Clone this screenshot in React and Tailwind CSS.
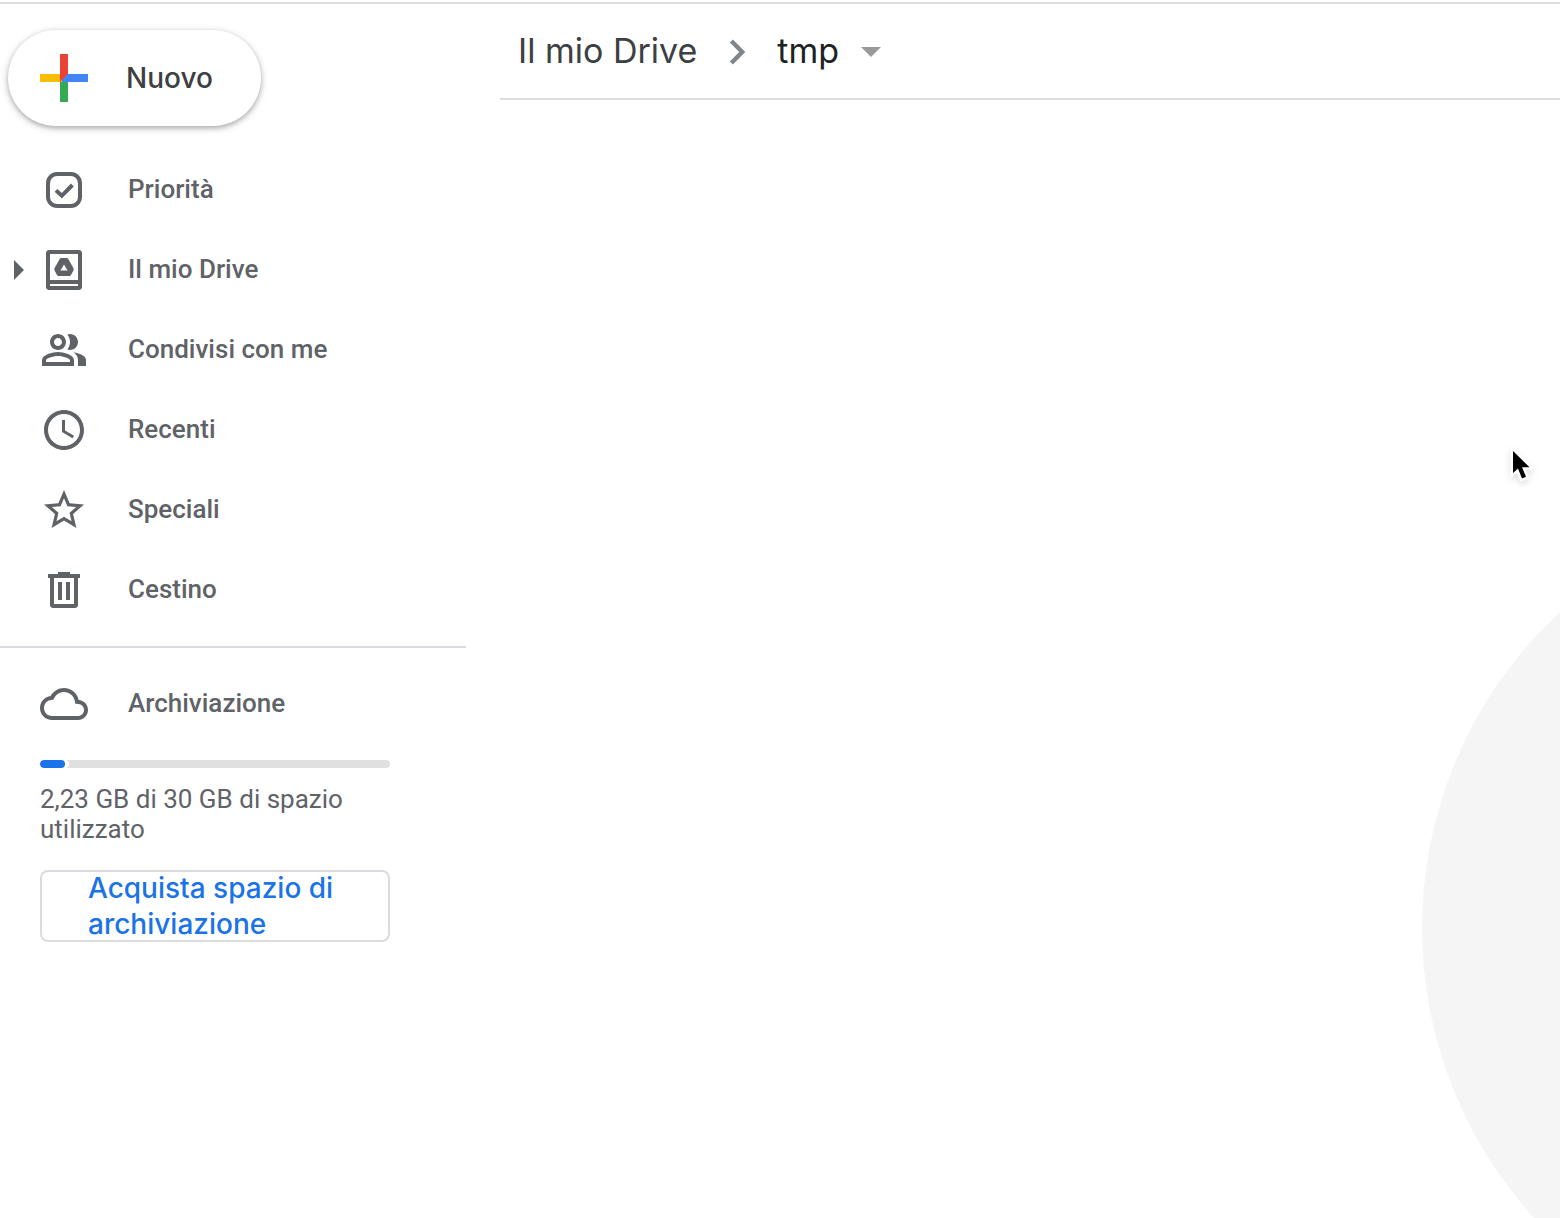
const glyphs = {
  priority: (
    <>
      <rect x="4" y="4" width="16" height="16" rx="4.6" fill="none" stroke="currentColor" strokeWidth="2" />
      <path d="M8 12.200l2.900 2.700 5.300-5.400" fill="none" stroke="currentColor" strokeWidth="2" />
    </>
  ),
  drive: (
    <>
      <path fillRule="evenodd" d="M4.500 2h15c.83 0 1.500.67 1.500 1.500v17c0 .83-.67 1.500-1.500 1.500h-15c-.83 0-1.500-.67-1.500-1.500v-17C3 2.670 3.670 2 4.500 2zM5 4v13h14V4H5zm0 15v1h14v-1H5z" />
      <path fillRule="evenodd" d="M10.600 6h2.800c.3 0 .5.1.7.4l2.700 4.900c.1.3.1.5 0 .8l-1.300 2.400c-.2.3-.4.5-.8.5H9.300c-.4 0-.6-.2-.8-.5l-1.300-2.400c-.1-.3-.1-.5 0-.8l2.700-4.900c.2-.3.4-.4.7-.4zM12 9.200l-1.800 3.100h3.600z" />
    </>
  ),
  people: (
    <path d="M16.67 13.13C18.04 14.06 19 15.32 19 17v3h4v-3c0-2.18-3.57-3.47-6.33-3.87zM15 12c2.21 0 4-1.79 4-4s-1.79-4-4-4c-.47 0-.91.1-1.33.24C14.5 5.27 15 6.58 15 8s-.5 2.73-1.33 3.76c.42.14.86.24 1.33.24zM9 12c2.21 0 4-1.79 4-4s-1.79-4-4-4-4 1.79-4 4 1.79 4 4 4zm0-6c1.1 0 2 .9 2 2s-.9 2-2 2-2-.9-2-2 .9-2 2-2zM9 13c-2.67 0-8 1.34-8 4v3h16v-3c0-2.66-5.33-4-8-4zm6 5H3v-.99C3.2 16.29 6.3 15 9 15s5.8 1.29 6 2v1z" />
  ),
  clock: (
    <path d="M11.99 2C6.47 2 2 6.48 2 12s4.47 10 9.99 10C17.52 22 22 17.52 22 12S17.52 2 11.99 2zM12 20c-4.42 0-8-3.58-8-8s3.58-8 8-8 8 3.58 8 8-3.58 8-8 8zM12.5 7H11v6l5.25 3.15.75-1.23-4.5-2.67z" />
  ),
  star: (
    <path d="M22 9.24l-7.19-.62L12 2 9.19 8.63 2 9.24l5.46 4.73L5.82 21 12 17.27 18.18 21l-1.63-7.03L22 9.24zM12 15.4l-3.76 2.27 1-4.28-3.32-2.88 4.38-.38L12 6.1l1.71 4.04 4.38.38-3.32 2.88 1 4.28L12 15.4z" />
  ),
  trash: (
    <path fillRule="evenodd" d="M9 3h6v1h5v2h-1v13.5c0 .83-.67 1.5-1.5 1.5h-11c-.83 0-1.5-.67-1.5-1.5V6H4V4h5zM7 6v13h10V6zM9 8h2v9H9zM13 8h2v9h-2z" />
  ),
  cloud: (
    <path d="M19.35 10.04C18.67 6.59 15.64 4 12 4 9.11 4 6.6 5.64 5.35 8.04 2.34 8.36 0 10.91 0 14c0 3.31 2.69 6 6 6h13c2.76 0 5-2.24 5-5 0-2.64-2.05-4.78-4.65-4.96zM19 18H6c-2.21 0-4-1.79-4-4 0-2.05 1.53-3.76 3.56-3.97l1.07-.11.5-.95C8.08 7.14 9.94 6 12 6c2.62 0 4.88 1.86 5.39 4.43l.3 1.5 1.53.11c1.56.1 2.78 1.41 2.78 2.96 0 1.65-1.35 3-3 3z" />
  ),
};

function Icon({ name }) {
  return (
    <svg viewBox="0 0 24 24" className="size-12 shrink-0" fill="currentColor" aria-hidden="true">
      {glyphs[name]}
    </svg>
  );
}

const items = [
  { icon: "priority", label: "Priorità" },
  { icon: "drive", label: "Il mio Drive", expandable: true },
  { icon: "people", label: "Condivisi con me" },
  { icon: "clock", label: "Recenti" },
  { icon: "star", label: "Speciali" },
  { icon: "trash", label: "Cestino" },
];

function NavItem({ icon, label, expandable }) {
  return (
    <li className="flex h-20 items-center">
      <span className="flex w-10 shrink-0 pl-3.5">
        {expandable && (
          <button type="button" aria-label="Espandi Il mio Drive">
            <svg viewBox="0 0 10 20" className="h-5 w-2.5" fill="currentColor" aria-hidden="true">
              <path d="M0 0l10 10L0 20z" />
            </svg>
          </button>
        )}
      </span>
      <a href="#" className="flex items-center gap-10">
        <Icon name={icon} />
        <span className="pb-0.5">{label}</span>
      </a>
    </li>
  );
}

function Sidebar() {
  return (
    <aside className="w-[466px] shrink-0 pt-[26px] font-medium">
      <button
        type="button"
        className="ml-2 flex h-24 items-center gap-[38px] rounded-full bg-white pr-12 pl-8 font-['Inter',sans-serif] text-[28px] text-[#3c4043] shadow-[0_2px_4px_rgba(60,64,67,0.30),0_2px_6px_2px_rgba(60,64,67,0.15)]"
      >
        <svg viewBox="0 0 48 48" className="size-12" aria-hidden="true">
          <path fill="#34A853" d="M20 24h8v24h-8z" />
          <path fill="#4285F4" d="M20 28h28v-8H26z" />
          <path fill="#FBBC05" d="M0 20h22v8H0z" />
          <path fill="#EA4335" d="M20 0h8v20l-8 8z" />
        </svg>
        Nuovo
      </button>
      <nav aria-label="Drive" className="mt-6 border-b-2 border-[#dadce0] pb-4">
        <ul>
          {items.map((item) => (
            <NavItem key={item.icon} {...item} />
          ))}
        </ul>
      </nav>
      <section className="pr-[76px] pl-10">
        <a href="#" className="flex items-center gap-10 pt-8">
          <Icon name="cloud" />
          <span className="pb-0.5">Archiviazione</span>
        </a>
        <div
          className="mt-8 h-2 overflow-hidden rounded-full bg-[#e0e0e0]"
          role="progressbar"
          aria-label="Spazio utilizzato"
          aria-valuenow={7}
          aria-valuemin={0}
          aria-valuemax={100}
        >
          <div className="h-2 w-[7%] rounded-full bg-[#1a73e8] shadow-[4px_0_0_#fff]" />
        </div>
        <p className="mt-4 leading-[30px] font-normal">2,23 GB di 30 GB di spazio utilizzato</p>
        <button
          type="button"
          className="mt-[26px] w-full rounded-lg px-12 text-left font-['Inter',sans-serif] text-[28px] leading-9 text-[#1a73e8] inset-ring-2 inset-ring-[#dadce0]"
        >
          Acquista spazio di archiviazione
        </button>
      </section>
    </aside>
  );
}

function Breadcrumb() {
  return (
    <nav aria-label="Percorso" className="flex h-24 items-center border-b-2 border-[#dadce0] pl-[18px] font-['Inter',sans-serif] text-[34px]">
      <a href="#" className="pb-0.5 text-[#3c4043]">Il mio Drive</a>
      <svg viewBox="0 0 24 24" className="mx-4 size-12" fill="none" stroke="#80868b" aria-hidden="true">
        <path d="M9.200 7l5.400 5.500-5.400 5.500" strokeWidth="2.200" />
      </svg>
      <button type="button" className="flex items-center gap-[22px] text-[#202124]">
        <span className="pb-0.5">tmp</span>
        <svg viewBox="0 0 20 12" className="h-3 w-5" fill="#9a9a9a" aria-hidden="true">
          <path d="M0 2h20L10 12z" />
        </svg>
      </button>
    </nav>
  );
}

export default function App() {
  return (
    <div className="relative flex min-h-screen overflow-hidden bg-white pt-0.5 font-['Roboto',sans-serif] text-[26px] text-[#5f6368]">
      <div className="flex flex-1 border-t-2 border-[#dadce0]">
        <Sidebar />
        <main className="ml-[34px] flex-1">
          <Breadcrumb />
        </main>
      </div>
      <div className="absolute top-[497px] left-[1422px] size-[862px] rounded-full bg-[#f5f5f5]" />
      <svg viewBox="0 0 26 38" className="absolute top-[447px] left-[1509px] h-[38px] w-[26px] overflow-visible drop-shadow-md" aria-hidden="true">
        <path
          d="M4 4v22l5-4.500 4 10 4-1.700-4-9.600h7.500z"
          fill="#000"
          stroke="#fff"
          strokeWidth="5"
          paintOrder="stroke"
        />
      </svg>
    </div>
  );
}
